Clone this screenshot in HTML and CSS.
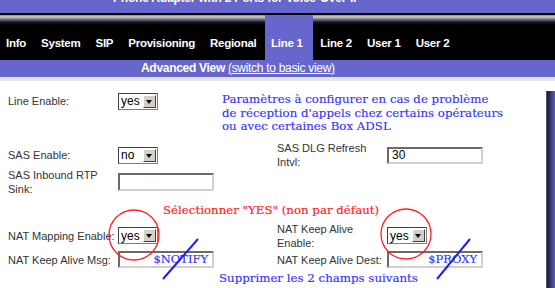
FILE: index.html
```html
<!DOCTYPE html>
<html lang="fr">
<head>
    <meta charset="UTF-8">
    <title>Line 1 - Advanced View</title>
    <link rel="stylesheet" href="styles.css">
</head>
<body>

    <div class="top">
        <div class="title">Phone Adapter with 2 Ports for Voice-Over-IP</div>
    </div>

    <nav class="tabs">
        <a class="tab">Info</a>
        <a class="tab">System</a>
        <a class="tab">SIP</a>
        <a class="tab">Provisioning</a>
        <a class="tab">Regional</a>
        <a class="tab active">Line 1</a>
        <a class="tab">Line 2</a>
        <a class="tab">User 1</a>
        <a class="tab">User 2</a>
    </nav>

    <div class="subbar">Advanced View <a href="#">(switch to basic view)</a></div>
    <div class="graybar"></div>

    <div class="content">
        <div class="form">
            <div class="label">Line Enable:</div>
            <div class="field"><span class="select">yes<i class="arrow"></i></span></div>
            <div></div><div></div>

            <div class="spacer"></div>

            <div class="label">SAS Enable:</div>
            <div class="field"><span class="select">no<i class="arrow"></i></span></div>
            <div class="label two">SAS DLG Refresh Intvl:</div>
            <div class="field"><span class="input">30</span></div>

            <div class="label two">SAS Inbound RTP Sink:</div>
            <div class="field"><span class="input tall"></span></div>
            <div></div><div></div>

            <div class="spacer"></div>

            <div class="label">NAT Mapping Enable:</div>
            <div class="field"><span class="select">yes<i class="arrow"></i></span></div>
            <div class="label two">NAT Keep Alive Enable:</div>
            <div class="field"><span class="select">yes<i class="arrow"></i></span></div>

            <div class="label">NAT Keep Alive Msg:</div>
            <div class="field"><span class="input note">$NOTIFY</span></div>
            <div class="label">NAT Keep Alive Dest:</div>
            <div class="field"><span class="input note">$PROXY</span></div>
        </div>
        <div class="sidebar"></div>

        <!-- annotations drawn over the page -->
        <p class="ann blue para">Paramètres à configurer en cas de problème<br>de réception d'appels chez certains opérateurs<br>ou avec certaines Box ADSL</p>
        <p class="ann red pick">Sélectionner "YES" (non par défaut)</p>
        <p class="ann blue drop">Supprimer les 2 champs suivants</p>
        <svg class="marks" width="555" height="207" viewBox="0 81 555 207">
            <circle cx="134" cy="235" r="25" fill="none" stroke="#ff2020" stroke-width="1.3"/>
            <circle cx="406" cy="234" r="25" fill="none" stroke="#ff2020" stroke-width="1.3"/>
            <line x1="163" y1="279" x2="198" y2="239" stroke="#1a1aff" stroke-width="2"/>
            <line x1="437" y1="279" x2="470" y2="239" stroke="#1a1aff" stroke-width="2"/>
        </svg>
    </div>

</body>
</html>
```

FILE: styles.css
```css
body {
    margin: 0;
    padding: 0;
    font-family: 'Liberation Sans', Arial, sans-serif;
    background-color: #fff;
    width: 555px;
    height: 288px;
    overflow: hidden;
}

.top {
    height: 13px;
    background-color: #6666cc;
    overflow: hidden;
}

.top .title {
    margin: -8px 0 0 113px;
    font-size: 12px;
    line-height: 12px;
    font-weight: bold;
    color: #fff;
    letter-spacing: -0.2px;
    white-space: nowrap;
}

.tabs {
    display: flex;
    height: 47px;
    background: linear-gradient(to bottom, #000 0, #000 2px, #8a8a8a 2px, #d0d0d0 4px, #7a7a88 6px, #1a1a28 9px, #000 12px);
}

.tab {
    margin-top: 2px;
    padding: 21px 7.5px 0 7.5px;
    font-size: 11.5px;
    line-height: 14px;
    font-weight: bold;
    color: #fff;
    letter-spacing: -0.25px;
}

.tab:first-child {
    padding-left: 6px;
}

.tab.active {
    background-color: #6666cc;
    margin-left: 1px;
    padding: 21px 10px 0 6px;
}

.subbar {
    height: 17px;
    line-height: 17px;
    padding-left: 141px;
    background-color: #6666cc;
    color: #fff;
    font-size: 12px;
    font-weight: bold;
    letter-spacing: -0.3px;
}

.subbar a {
    color: #fff;
    font-weight: normal;
    text-decoration: underline;
}

.graybar {
    height: 4px;
    background-color: #e4e4e4;
}

.content {
    position: relative;
    display: flex;
    height: 207px;
}

.form {
    flex: 1;
    display: grid;
    grid-template-columns: 110px 159px 110px 100px;
    grid-template-rows: 20px 32px 24px 30px 25px 27px 21px;
    align-items: center;
    padding: 10px 0 0 8px;
}

.spacer {
    grid-column: 1 / 5;
}

.label {
    font-size: 11px;
    line-height: 14px;
    color: #333;
}

.field {
    display: flex;
    align-items: center;
}

.select {
    display: inline-flex;
    align-items: center;
    justify-content: space-between;
    box-sizing: border-box;
    width: 40px;
    height: 17px;
    padding: 0 1px 0 2px;
    border: 1px solid #7f7f7f;
    border-top-color: #404040;
    border-left-color: #404040;
    font-size: 12px;
    color: #000;
    background-color: #fff;
}

.arrow {
    position: relative;
    width: 13px;
    height: 13px;
    box-sizing: border-box;
    background-color: #d4d0c8;
    border: 1px solid;
    border-color: #fff #404040 #404040 #fff;
}

.arrow::after {
    content: "";
    position: absolute;
    left: 2px;
    top: 4px;
    border-left: 3.5px solid transparent;
    border-right: 3.5px solid transparent;
    border-top: 4px solid #000;
}

.input {
    display: block;
    box-sizing: border-box;
    width: 96px;
    height: 17px;
    padding: 0 3px;
    border: 2px solid;
    border-color: #6a6a6a #d4d0c8 #d4d0c8 #6a6a6a;
    font-size: 12px;
    line-height: 13px;
    color: #000;
    background-color: #fff;
}

.input.tall {
    height: 18px;
}

.input.note {
    text-align: right;
    padding-right: 4px;
    font-family: 'DejaVu Serif', 'Liberation Serif', serif;
    font-size: 11.5px;
    color: #3333ff;
    -webkit-text-stroke: 0.15px #3333ff;
}

.sidebar {
    width: 9px;
    margin-top: 10px;
    background: linear-gradient(to right, #8080a0 0, #20203c 1px, #262650 3px, #4c4ca0 7px, #5a5ab4 9px);
}

.ann {
    position: absolute;
    margin: 0;
    font-family: 'DejaVu Serif', 'Liberation Serif', serif;
    font-size: 11.8px;
    line-height: 13.5px;
    white-space: nowrap;
}

.blue {
    color: #3333ff;
    -webkit-text-stroke: 0.15px #3333ff;
}

.red {
    color: #ff2020;
    -webkit-text-stroke: 0.15px #ff2020;
}

.para {
    left: 222px;
    top: 12px;
}

.pick {
    left: 163px;
    top: 123px;
}

.drop {
    left: 219px;
    top: 191px;
}

.marks {
    position: absolute;
    left: 0;
    top: 0;
}
```
